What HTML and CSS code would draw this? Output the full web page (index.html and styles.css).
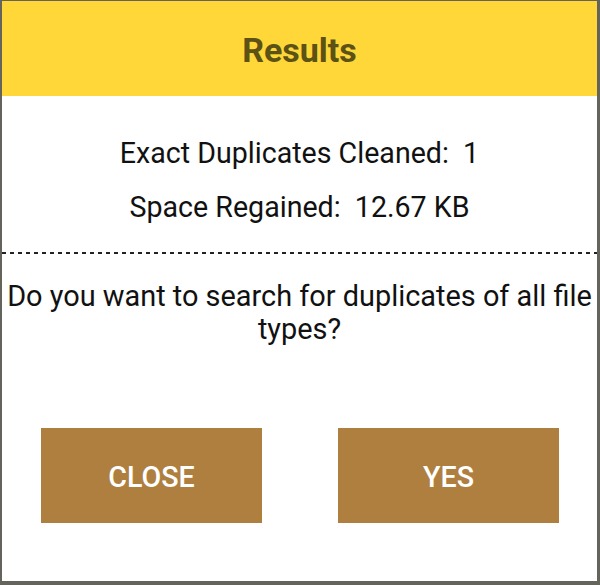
FILE: index.html
```html
<!DOCTYPE html>
<html lang="en">

<head>
    <meta charset="UTF-8" />
    <meta name="viewport" content="width=device-width, initial-scale=1.0" />
    <title>Results</title>
    <link rel="stylesheet" href="styles.css">
</head>

<body>
    <div class="dialog">
        <div class="header">
            <h1>Results</h1>
        </div>
        <div class="stats">
            <p>Exact Duplicates Cleaned:&nbsp; 1</p>
            <p>Space Regained:&nbsp; 12.67 KB</p>
        </div>
        <div class="divider"></div>
        <p class="question">Do you want to search for duplicates of all file types?</p>
        <div class="buttons">
            <button type="button">CLOSE</button>
            <button type="button">YES</button>
        </div>
    </div>
</body>

</html>
```

FILE: styles.css
```css
body {
    margin: 0;
    font-family: Roboto, "Noto Sans", sans-serif;
    background-color: #64645c;
}

.dialog {
    margin: 1px 3px 4px 2px;
    height: 580px;
    background-color: white;
    display: flex;
    flex-direction: column;
}

.header {
    height: 95px;
    padding-top: 2px;
    box-sizing: border-box;
    background-color: #ffd738;
    display: flex;
    align-items: center;
    justify-content: center;
}

h1 {
    margin: 0;
    font-size: 34px;
    font-weight: bold;
    color: #5c5215;
}

.stats {
    padding-top: 39px;
    text-align: center;
}

.stats p {
    margin: 0;
    font-size: 28.6px;
    line-height: 36px;
    color: #111;
}

.stats p + p {
    margin-top: 18px;
}

.divider {
    margin: 27px 0 0;
    height: 2px;
    background: repeating-linear-gradient(90deg, #222 0 4px, transparent 4px 8px);
}

.question {
    margin: 26px 3px 0;
    text-align: center;
    font-size: 28.9px;
    line-height: 33px;
    color: #111;
}

.buttons {
    display: flex;
    justify-content: space-between;
    padding: 0 38px 0 39px;
    margin-top: 82px;
}

button {
    width: 221px;
    height: 95px;
    border: none;
    border-radius: 0;
    background-color: #af7f40;
    color: white;
    font-family: Roboto, "Noto Sans", sans-serif;
    font-size: 28.6px;
    font-weight: 500;
    padding: 2px 0 0;
}
```
